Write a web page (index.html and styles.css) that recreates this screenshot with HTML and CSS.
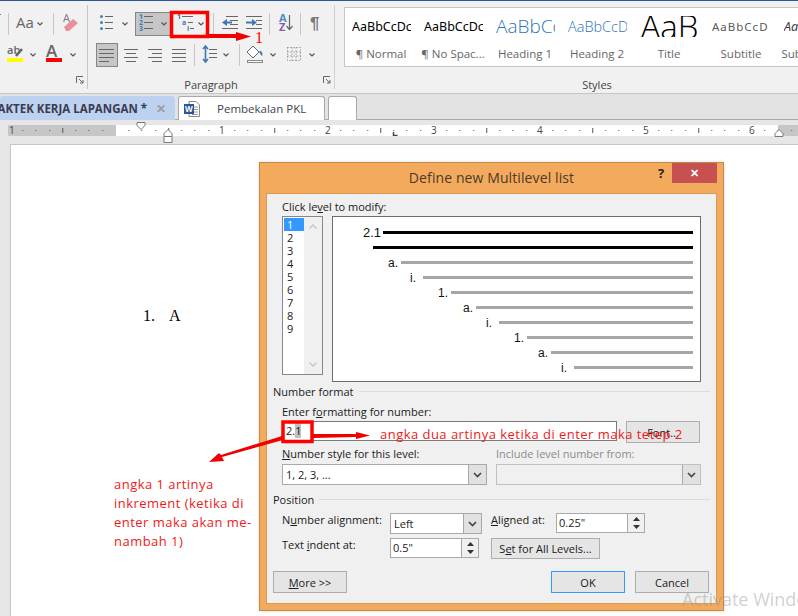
FILE: index.html
```html
<!doctype html>
<html>
<head>
    <meta charset="UTF-8">
    <title>Define new Multilevel list</title>
    <link rel="stylesheet" href="styles.css">
</head>
<body>
<div class="page">

    <!-- ribbon -->
    <div class="ribbon">
        <div class="group group_font">
            <div class="tool_row">
                <svg width="54" height="24"><rect x="0" y="2" width="1" height="1" fill="#4a7ebb"/><rect x="8" y="1" width="1" height="22" fill="#c6c6c6"/><text x="16" y="16" class="ic_aa">Aa</text><path class="chev" d="M37.500 10.500l2.500 2.500 2.500-2.500"/><rect x="53" y="1" width="1" height="22" fill="#c6c6c6"/></svg>
                <svg width="33" height="24"><text x="9" y="10" class="ic_a_small">A</text><path d="M10 15l9-8 5 4-9 8h-3z" fill="#e8909c"/></svg>
            </div>
            <div class="tool_row">
                <svg width="41" height="24"><text x="7" y="11" class="ic_ab">ab</text><path d="M16 13l6-7" stroke="#666" stroke-width="2.500"/><rect x="7" y="15" width="16" height="4" fill="#ffff00"/><path class="chev" d="M30.500 10.500l2.500 2.500 2.500-2.500"/></svg>
                <svg width="46" height="24"><text x="5" y="14" class="ic_a">A</text><rect x="5" y="15" width="16" height="4" fill="#ff0000"/><path class="chev" d="M29.500 10.500l2.500 2.500 2.500-2.500"/></svg>
            </div>
            <div class="group_foot">
                <svg class="launcher" width="8" height="8"><path d="M.5 7V.5H7M3 3l4 4M7 4v3H4" fill="none" stroke="#666"/></svg>
            </div>
        </div>

        <div class="group group_para">
            <div class="tool_row">
                <svg width="39" height="24"><g fill="#4a7ebb"><circle cx="5.500" cy="4.500" r="1.500"/><circle cx="5.500" cy="10.500" r="1.500"/><circle cx="5.500" cy="16.500" r="1.500"/></g><path class="rule" d="M9 4.500h8M9 10.500h8M9 16.500h8"/><path class="chev" d="M26.500 10.500l2.500 2.500 2.500-2.500"/></svg>
                <svg class="tool_on" width="36" height="24"><g class="ic_num"><text x="4" y="7">1</text><text x="4" y="13">2</text><text x="4" y="19">3</text></g><path class="rule" d="M9 4.500h9M9 10.500h9M9 16.500h9"/><path class="chev" d="M26.500 10.500l2.500 2.500 2.500-2.500"/></svg>
                <svg width="42" height="24"><g class="ic_num"><text x="6" y="7">1</text><text x="11" y="13">a</text><text x="16" y="19">i</text></g><path class="rule" d="M11 4.500h11M17 10.500h5M19 16.500h4"/><path class="chev" d="M27.500 10.500l2.500 2.500 2.500-2.500"/></svg>
                <i class="sep"></i>
                <svg width="28" height="24"><path class="rule" d="M12 4.500h12M16 8.500h8M16 12.500h8M8 16.500h16"/><path d="M8 10.500l5-3.500v2.500h5v2h-5V14z" fill="#3f78b5"/></svg>
                <svg width="27" height="24"><path class="rule" d="M4 4.500h16M14 8.500h6M14 12.500h6M4 16.500h16"/><path d="M15 10.500l-5-3.500v2.500H4v2h6V14z" fill="#3f78b5"/></svg>
                <i class="sep"></i>
                <svg width="30" height="24"><text x="9" y="10" class="ic_az_a">A</text><text x="9" y="19" class="ic_az_z">Z</text><path d="M19.500 3v14M16.500 14l3 3.500 3-3.500" fill="none" stroke="#666" stroke-width="1.200"/></svg>
                <i class="sep"></i>
                <svg width="33" height="24"><text x="9" y="17" class="ic_pil">¶</text></svg>
            </div>
            <div class="tool_row">
                <svg class="tool_on" width="22" height="24"><path class="rule" d="M3 6.500h15M3 10.500h15M3 14.500h15M3 18.500h10"/></svg>
                <svg width="26" height="24"><path class="rule" d="M6 6.500h14M8 10.500h10M6 14.500h14M8 18.500h10"/></svg>
                <svg width="24" height="24"><path class="rule" d="M4 6.500h14M8 10.500h10M4 14.500h14M8 18.500h10"/></svg>
                <svg width="26" height="24"><path class="rule" d="M4 6.500h14M4 10.500h14M4 14.500h14M4 18.500h14"/></svg>
                <i class="sep"></i>
                <svg width="44" height="24"><path d="M10.500 3v16M8 6l2.500-3 2.500 3M8 16l2.500 3 2.500-3" fill="none" stroke="#3f78b5" stroke-width="1.600"/><path class="rule" d="M14 6.500h8M14 10.500h8M14 14.500h8"/><path class="chev" d="M28.500 10.500l2.500 2.500 2.500-2.500"/></svg>
                <i class="sep"></i>
                <svg width="40" height="24"><path d="M13 3l6 6-6 6-6-6z" fill="#fff" stroke="#666"/><path d="M19 8c3 0 4 2 3 5-1-1-2-2-3-5z" fill="#3f78b5"/><rect x="7.500" y="17.500" width="15" height="2" fill="#fff" stroke="#888"/><path class="chev" d="M30.500 10.500l2.500 2.500 2.500-2.500"/></svg>
                <svg width="40" height="24"><path class="dots" d="M7.500 4.500h13v13h-13zM7.500 9h13M7.500 13h13M12 4.500v13M16 4.500v13"/><path class="chev" d="M29.500 10.500l2.500 2.500 2.500-2.500"/></svg>
            </div>
            <div class="group_foot">
                <span class="group_name">Paragraph</span>
                <svg class="launcher" width="8" height="8"><path d="M.5 7V.5H7M3 3l4 4M7 4v3H4" fill="none" stroke="#666"/></svg>
            </div>
        </div>

        <div class="group group_styles">
            <div class="gallery">
                <div class="style_item"><div class="style_view st_normal">AaBbCcDc</div><div class="style_name">¶ Normal</div></div>
                <div class="style_item"><div class="style_view st_normal">AaBbCcDc</div><div class="style_name">¶ No Spac...</div></div>
                <div class="style_item"><div class="style_view st_h1">AaBbCc</div><div class="style_name">Heading 1</div></div>
                <div class="style_item"><div class="style_view st_h2">AaBbCcD</div><div class="style_name">Heading 2</div></div>
                <div class="style_item"><div class="style_view st_title">AaB</div><div class="style_name">Title</div></div>
                <div class="style_item"><div class="style_view st_sub">AaBbCcD</div><div class="style_name">Subtitle</div></div>
                <div class="style_item"><div class="style_view st_subtle">AaBbCcDc</div><div class="style_name">Subtle Em...</div></div>
            </div>
            <div class="group_foot">
                <span class="group_name">Styles</span>
            </div>
        </div>
    </div>

    <!-- document tabs -->
    <div class="tabs">
        <div class="tab tab_active"><span class="tab_title">PRAKTEK KERJA LAPANGAN *</span><span class="tab_x">✕</span></div>
        <div class="tab tab_doc">
            <svg width="16" height="16"><path d="M5 .5h7l3.500 3.500v11.500H5z" fill="#fff" stroke="#888"/><path d="M8 6h6M8 8.500h6M8 11h6M8 13.500h6" stroke="#999"/><rect y="3" width="10" height="10" fill="#2b579a"/><text x="1" y="11" class="ic_w">W</text></svg>
            <span>Pembekalan PKL</span>
        </div>
        <div class="tab tab_new"></div>
    </div>

    <!-- ruler -->
    <div class="ruler_band">
        <svg class="ruler" width="790" height="11">
            <defs>
                <pattern id="ticks" x="1.250" width="106" height="11" patternUnits="userSpaceOnUse">
                    <g fill="#555">
                        <rect x="13" y="5" width="1" height="1"/><rect x="26" y="5" width="1" height="1"/><rect x="40" y="5" width="1" height="1"/>
                        <rect x="53" y="3" width="1" height="5"/>
                        <rect x="66" y="5" width="1" height="1"/><rect x="79" y="5" width="1" height="1"/><rect x="93" y="5" width="1" height="1"/>
                    </g>
                </pattern>
            </defs>
            <rect width="790" height="11" fill="#fff"/>
            <rect width="108" height="11" fill="#c6c6c6"/>
            <rect x="770" width="20" height="11" fill="#c6c6c6"/>
            <rect width="790" height="11" fill="url(#ticks)"/>
            <g class="ruler_num">
                <text x="1" y="9">1</text><text x="211" y="9">1</text><text x="317" y="9">2</text><text x="423" y="9">3</text><text x="529" y="9">4</text><text x="635" y="9">5</text><text x="741" y="9">6</text>
            </g>
            <path d="M385.500 7v3.500h4" fill="none" stroke="#444" stroke-width="1.500"/>
        </svg>
        <svg class="marker marker_first" width="10" height="9"><path d="M1 .5h8v3l-4 4-4-4z" fill="#fff" stroke="#777"/></svg>
        <svg class="marker marker_hang" width="10" height="14"><path d="M5 .5l4 4v3H1v-3zM1 7.500h8v6H1z" fill="#fff" stroke="#777"/></svg>
        <svg class="marker marker_right" width="10" height="8"><path d="M5 .5l4 4v3H1v-3z" fill="#fff" stroke="#777"/></svg>
    </div>

    <!-- document -->
    <div class="doc">
        <div class="doc_page">
            <p class="doc_item"><span>1.</span><span>A</span></p>
        </div>
    </div>

    <!-- dialog -->
    <div class="dialog">
        <div class="dialog_title">
            <span>Define new Multilevel list</span>
            <b class="dialog_help">?</b>
            <span class="dialog_close">✕</span>
        </div>
        <div class="dialog_body">
            <div class="lbl lbl_click">Click le<u>v</u>el to modify:</div>
            <div class="level_row">
                <div class="level_list">
                    <div class="level_nums">
                        <div class="level_on">1</div><div>2</div><div>3</div><div>4</div><div>5</div><div>6</div><div>7</div><div>8</div><div>9</div>
                    </div>
                    <div class="level_scroll">
                        <svg width="8" height="5"><path d="M.5 4.500L4 1l3.500 3.500" fill="none" stroke="#c8c8c8" stroke-width="1.500"/></svg>
                        <svg width="8" height="5"><path d="M.5.500L4 4l3.500-3.500" fill="none" stroke="#c8c8c8" stroke-width="1.500"/></svg>
                    </div>
                </div>
                <div class="preview">
                    <div class="pv pv1"><span>2.1</span><i></i></div>
                    <div class="pv pv2"><i></i></div>
                    <div class="pv pv3"><span>a.</span><i></i></div>
                    <div class="pv pv4"><span>i.</span><i></i></div>
                    <div class="pv pv5"><span>1.</span><i></i></div>
                    <div class="pv pv6"><span>a.</span><i></i></div>
                    <div class="pv pv7"><span>i.</span><i></i></div>
                    <div class="pv pv8"><span>1.</span><i></i></div>
                    <div class="pv pv9"><span>a.</span><i></i></div>
                    <div class="pv pv10"><span>i.</span><i></i></div>
                </div>
            </div>

            <div class="sec_head sec_number"><span>Number format</span><i></i></div>
            <div class="lbl lbl_enter">Enter f<u>o</u>rmatting for number:</div>
            <div class="fmt_row">
                <div class="fmt_input"><span>2.<mark>1</mark></span></div>
                <div class="btn btn_font">Font...</div>
            </div>
            <div class="style_row">
                <div class="style_col">
                    <div class="lbl"><u>N</u>umber style for this level:</div>
                    <div class="select select_wide"><span>1, 2, 3, ...</span><div class="select_arrow"><svg width="9" height="6"><path d="M1 1l3.500 3.500L8 1" fill="none" stroke="#444" stroke-width="1.600"/></svg></div></div>
                </div>
                <div class="style_col">
                    <div class="lbl lbl_off">Include level number from:</div>
                    <div class="select select_wide select_off"><span></span><div class="select_arrow"><svg width="9" height="6"><path d="M1 1l3.500 3.500L8 1" fill="none" stroke="#444" stroke-width="1.600"/></svg></div></div>
                </div>
            </div>

            <div class="sec_head sec_position"><span>Position</span><i></i></div>
            <div class="pos_grid">
                <div class="lbl">N<u>u</u>mber alignment:</div>
                <div class="select select_align"><span>Left</span><div class="select_arrow"><svg width="9" height="6"><path d="M1 1l3.500 3.500L8 1" fill="none" stroke="#444" stroke-width="1.600"/></svg></div></div>
                <div class="lbl"><u>A</u>ligned at:</div>
                <div class="spin spin_at"><span>0.25"</span><div class="spin_btns"><svg width="7" height="4"><path d="M3.500 0L7 4H0z" fill="#333"/></svg><svg width="7" height="4"><path d="M3.500 4L7 0H0z" fill="#333"/></svg></div></div>
                <div class="lbl">Text <u>i</u>ndent at:</div>
                <div class="spin spin_indent"><span>0.5"</span><div class="spin_btns"><svg width="7" height="4"><path d="M3.500 0L7 4H0z" fill="#333"/></svg><svg width="7" height="4"><path d="M3.500 4L7 0H0z" fill="#333"/></svg></div></div>
                <div class="btn btn_all">S<u>e</u>t for All Levels...</div>
            </div>

            <div class="dialog_foot">
                <div class="btn btn_foot"><span><u>M</u>ore &gt;&gt;</span></div>
                <div class="btn btn_foot btn_ok">OK</div>
                <div class="btn btn_foot">Cancel</div>
            </div>
        </div>
    </div>

    <!-- red notes drawn on top of the screenshot -->
    <svg class="notes" width="798" height="616">
        <g fill="none" stroke="#ff0000" stroke-width="3.500">
            <rect x="171.500" y="12.500" width="36" height="24"/>
            <rect x="283" y="422" width="29" height="19.500"/>
        </g>
        <path d="M208 34h28v-2l15 4.500-15 4.500v-3h-28z" fill="#f00000"/>
        <path d="M313 434h43v-2l14 3.500-14 3.500v-2l-43 1z" fill="#f00000"/>
        <path d="M282 436l1 4-61 17 2 4-15 1 10-9 2 2z" fill="#f00000"/>
        <text x="255" y="43" class="note_one">1</text>
    </svg>
    <div class="note note_right">angka dua artinya ketika di enter maka tetep 2</div>
    <div class="note note_left">angka 1 artinya<br>inkrement (ketika di<br>enter maka akan me-<br>nambah 1)</div>
    <div class="activate">Activate Windows</div>
</div>
</body>
</html>
```

FILE: styles.css
```css
html, body {
    margin: 0;
    padding: 0;
}
body {
    width: 798px;
    height: 616px;
    overflow: hidden;
    background: #ffffff;
    font-family: "Open Sans", "Noto Sans", sans-serif;
    color: #222222;
}
.page {
    position: relative;
    width: 798px;
    height: 616px;
    overflow: hidden;
    background: #e6e6e6;
}
svg {
    display: block;
    flex: none;
}

/* ribbon */
.ribbon {
    display: flex;
    box-sizing: border-box;
    border-top: 1px solid #2b579a;
    background: #f1f1f1;
    border-bottom: 1px solid #c6c6c6;
    height: 94px;
    padding-top: 4px;
}
.group {
    display: flex;
    flex-direction: column;
    height: 84px;
    box-sizing: border-box;
    position: relative;
}
.group_font {
    width: 88px;
    border-right: 1px solid #c6c6c6;
    padding-top: 7px;
}
.group_para {
    width: 247px;
    padding: 7px 0 0 8px;
    border-right: 1px solid #d0d0d0;
}
.group_styles {
    flex: 1;
    padding: 2px 0 0 9px;
    min-width: 0;
}
.tool_row {
    display: flex;
    height: 24px;
    margin-bottom: 7px;
}
.tool_on {
    background: #c6c6c6;
    outline: 1px solid #868686;
    outline-offset: -1px;
}
.sep {
    display: block;
    width: 1px;
    height: 22px;
    margin-top: 1px;
    background: #c6c6c6;
}
.group_foot {
    position: absolute;
    left: 0;
    right: 0;
    bottom: 1px;
    height: 16px;
    text-align: center;
}
.group_styles .group_foot {
    left: 61px;
}
.group_name {
    font-size: 11px;
    line-height: 16px;
    color: #444444;
}
.launcher {
    position: absolute;
    right: 3px;
    top: 4px;
}
.chev {
    fill: none;
    stroke: #555555;
    stroke-width: 1.200;
}
.rule {
    fill: none;
    stroke: #666666;
    stroke-width: 1;
}
.dots {
    fill: none;
    stroke: #777777;
    stroke-dasharray: 1 2;
}
.ic_aa {
    font-size: 15px;
    fill: #666666;
}
.ic_a_small {
    font-size: 11px;
    fill: #777777;
}
.ic_ab {
    font-size: 11px;
    font-weight: 600;
    fill: #666666;
}
.ic_a {
    font-size: 17px;
    font-weight: 600;
    fill: #666666;
}
.ic_num {
    font-size: 7px;
    font-weight: 700;
    fill: #3f78b5;
}
.ic_az_a {
    font-size: 11px;
    font-weight: 700;
    fill: #4a8cc7;
}
.ic_az_z {
    font-size: 11px;
    font-weight: 700;
    fill: #8a5aa8;
}
.ic_pil {
    font-family: "Liberation Sans", sans-serif;
    font-size: 17px;
    font-weight: 700;
    fill: #777777;
}
.ic_w {
    font-size: 8px;
    font-weight: 700;
    fill: #ffffff;
}

/* styles gallery */
.gallery {
    display: flex;
    height: 60px;
    box-sizing: border-box;
    border: 1px solid #c6c6c6;
    border-right: 0;
    background: #ffffff;
    overflow: hidden;
}
.style_item {
    flex: none;
    width: 72px;
    padding: 8px 6px 0 7px;
    box-sizing: border-box;
}
.style_view {
    height: 21px;
    line-height: 21px;
    overflow: hidden;
    white-space: nowrap;
    font-family: "Noto Sans", sans-serif;
}
.style_name {
    margin: 9px -6px 0 -7px;
    font-size: 11.500px;
    line-height: 16px;
    color: #666666;
    white-space: nowrap;
    text-align: center;
}
.st_normal {
    font-size: 12.500px;
    color: #000000;
}
.st_h1 {
    font-family: "Open Sans", sans-serif;
    font-size: 19px;
    font-weight: 300;
    color: #2e74b5;
}
.st_h2 {
    font-family: "Open Sans", sans-serif;
    font-size: 14.500px;
    font-weight: 300;
    color: #2e74b5;
}
.st_title {
    font-family: "Open Sans", sans-serif;
    font-size: 33px;
    font-weight: 300;
    color: #000000;
    text-align: center;
}
.st_sub {
    font-size: 11.500px;
    letter-spacing: 1px;
    color: #5a5a5a;
}
.st_subtle {
    font-size: 12.500px;
    font-style: italic;
    color: #404040;
}

/* tabs */
.tabs {
    display: flex;
    height: 26px;
    box-sizing: border-box;
    padding-top: 2px;
    gap: 3px;
    background: #e3e3e3;
    border-bottom: 1px solid #a9a9a9;
}
.tab {
    display: flex;
    align-items: center;
    height: 24px;
    box-sizing: border-box;
    border: 1px solid #a9a9a9;
    border-bottom: 0;
    border-radius: 3px 3px 0 0;
    background: #ffffff;
    font-size: 11.500px;
}
.tab_active {
    width: 175px;
    justify-content: flex-end;
    overflow: hidden;
    border: 0;
    background: #bcd2f0;
    white-space: nowrap;
    font-weight: 700;
    color: #3b3b50;
}
.tab_title {
    flex: none;
}
.tab_x {
    flex: none;
    width: 28px;
    text-align: center;
    font-size: 12px;
    color: #9c9c9c;
}
.tab_doc {
    width: 147px;
    padding-left: 5px;
    gap: 17px;
    color: #3f3f50;
}
.tab_new {
    width: 29px;
}

/* ruler */
.ruler_band {
    position: relative;
    height: 24px;
    padding: 5px 0 0 8px;
    box-sizing: border-box;
}
.ruler text {
    font-size: 10px;
    fill: #444444;
}
.marker {
    position: absolute;
}
.marker_first {
    left: 136px;
    top: 2px;
}
.marker_hang {
    left: 163px;
    top: 9px;
}
.marker_right {
    left: 774px;
    top: 9px;
}

/* document */
.doc {
    height: 472px;
    padding-left: 10px;
}
.doc_page {
    height: 100%;
    background: #ffffff;
    border-left: 1px solid #c6c6c6;
    border-top: 1px solid #c6c6c6;
    padding: 161px 0 0 132px;
    box-sizing: border-box;
}
.doc_item {
    display: flex;
    gap: 14px;
    margin: 0;
    font-family: "Liberation Serif", serif;
    font-size: 16px;
    line-height: 20px;
    color: #000000;
}

/* dialog */
.dialog {
    position: absolute;
    left: 259px;
    top: 162px;
    width: 465px;
    height: 449px;
    box-sizing: border-box;
    padding: 0 6px 7px;
    background: #f4aa5c;
    border: 1px solid #c48a48;
    box-shadow: 0 0 3px rgba(0, 0, 0, .15);
}
.dialog_title {
    position: relative;
    height: 30px;
    line-height: 30px;
    text-align: center;
    font-size: 14px;
    letter-spacing: .1px;
    color: #4b3a2a;
}
.dialog_help {
    position: absolute;
    left: 392px;
    top: -5px;
    font-size: 13px;
    color: #222222;
}
.dialog_close {
    position: absolute;
    left: 406px;
    top: 0;
    width: 45px;
    height: 20px;
    line-height: 20px;
    background: #c75050;
    color: #ffffff;
    font-size: 11px;
    font-weight: 700;
}
.dialog_body {
    height: 411px;
    box-sizing: border-box;
    background: #f0f0f0;
    border: 1px solid #d99a52;
    padding-top: 6px;
    font-size: 11px;
    color: #1a1a1a;
}
.lbl {
    height: 14px;
    line-height: 14px;
    white-space: nowrap;
}
.lbl_click {
    margin: 0 0 2px 15px;
}
.lbl_off {
    color: #8c8c8c;
}
.level_row {
    display: flex;
    gap: 9px;
    height: 166px;
    margin-left: 15px;
}
.level_list {
    display: flex;
    width: 41px;
    height: 159px;
    box-sizing: border-box;
    border: 1px solid #828790;
    background: #ffffff;
}
.level_nums {
    width: 21px;
    padding: 1px 0 0 1px;
    box-sizing: border-box;
    font-size: 11px;
    line-height: 13px;
}
.level_nums div {
    padding-left: 3px;
}
.level_nums .level_on {
    background: #3399ff;
    color: #ffffff;
}
.level_scroll {
    flex: 1;
    display: flex;
    flex-direction: column;
    align-items: center;
    justify-content: space-between;
    padding: 7px 0;
    background: #f0f0f0;
}
.preview {
    width: 369px;
    box-sizing: border-box;
    border: 1px solid #6d6d6d;
    background: #ffffff;
    padding: 8px 7px 0 0;
}
.pv {
    display: flex;
    align-items: center;
    gap: 2px;
    height: 15px;
    font-family: "Liberation Sans", sans-serif;
    font-size: 12px;
    color: #111111;
}
.pv span {
    flex: none;
    width: 11px;
}
.pv i {
    flex: 1;
    display: block;
    height: 3px;
    background: #a6a6a6;
}
.pv1 i, .pv2 i {
    background: #000000;
}
.pv1 {
    padding-left: 30px;
    font-size: 13px;
}
.pv1 span {
    width: 18px;
}
.pv2 {
    padding-left: 40px;
}
.pv3 {
    padding-left: 55px;
}
.pv4 {
    padding-left: 77px;
}
.pv5 {
    padding-left: 105px;
}
.pv6 {
    padding-left: 130px;
}
.pv7 {
    padding-left: 153px;
}
.pv8 {
    padding-left: 181px;
}
.pv9 {
    padding-left: 205px;
}
.pv10 {
    padding-left: 228px;
}
.sec_head {
    display: flex;
    align-items: center;
    gap: 5px;
    height: 14px;
    margin: 2px 6px 0 6px;
    white-space: nowrap;
}
.sec_head i {
    flex: 1;
    display: block;
    height: 1px;
    background: #dcdcdc;
}
.sec_position {
    margin-top: 7px;
}
.lbl_enter {
    margin: 7px 0 2px 15px;
}
.fmt_row {
    display: flex;
    gap: 9px;
    margin-left: 15px;
    height: 22px;
}
.fmt_input {
    width: 335px;
    height: 20px;
    box-sizing: border-box;
    padding-left: 3px;
    line-height: 18px;
    border: 1px solid #7a7a7a;
    background: #ffffff;
}
.fmt_input mark {
    background: #c0c0c0;
    color: #111111;
}
.btn {
    display: flex;
    align-items: center;
    justify-content: center;
    box-sizing: border-box;
    border: 1px solid #adadad;
    background: #e5e5e5;
    white-space: nowrap;
}
.btn_font {
    width: 74px;
    height: 22px;
}
.style_row {
    display: flex;
    gap: 9px;
    margin: 4px 0 0 15px;
}
.style_col .lbl {
    margin-bottom: 3px;
}
.select {
    display: flex;
    box-sizing: border-box;
    justify-content: space-between;
    border: 1px solid #a9a9a9;
    background: #ffffff;
}
.select span {
    padding-left: 3px;
    line-height: 20px;
}
.select_wide {
    width: 205px;
    height: 21px;
}
.select_off {
    background: #f0f0f0;
    border-color: #c0c0c0;
}
.select_arrow {
    display: flex;
    align-items: center;
    justify-content: center;
    width: 17px;
    background: #e1e1e1;
    border-left: 1px solid #a9a9a9;
}
.pos_grid {
    display: grid;
    grid-template-columns: 108px 101px 65px 90px;
    grid-template-rows: 25px 21px;
    margin: 7px 0 0 15px;
}
.select_align {
    width: 92px;
    height: 21px;
}
.spin {
    display: flex;
    justify-content: space-between;
    height: 20px;
    box-sizing: border-box;
    border: 1px solid #a9a9a9;
    background: #ffffff;
}
.spin span {
    padding-left: 2px;
    line-height: 18px;
}
.spin_at, .spin_indent {
    width: 89px;
}
.spin_btns {
    display: flex;
    flex-direction: column;
    align-items: center;
    justify-content: center;
    gap: 4px;
    width: 16px;
    background: #f0f0f0;
    border-left: 1px solid #a9a9a9;
}
.btn_all {
    grid-column: 3 / 5;
    width: 109px;
    height: 21px;
}
.dialog_foot {
    display: flex;
    gap: 10px;
    margin: 12px 7px 0 6px;
}
.btn_foot {
    width: 74px;
    height: 22px;
}
.btn_ok {
    margin-left: auto;
    border: 1px solid #3399ff;
}

/* notes */
.notes {
    position: absolute;
    left: 0;
    top: 0;
}
.note_one {
    font-family: "Liberation Serif", serif;
    font-size: 16px;
    fill: #ff0000;
}
.note {
    position: absolute;
    color: #f01818;
    font-size: 13px;
    letter-spacing: .47px;
    white-space: nowrap;
}
.note_right {
    left: 380px;
    top: 425px;
    line-height: 18px;
}
.note_left {
    left: 114px;
    top: 475px;
    line-height: 19px;
}
.activate {
    position: absolute;
    left: 682px;
    top: 586px;
    font-size: 18px;
    line-height: 26px;
    white-space: nowrap;
    color: rgba(150, 150, 150, .45);
}
```
